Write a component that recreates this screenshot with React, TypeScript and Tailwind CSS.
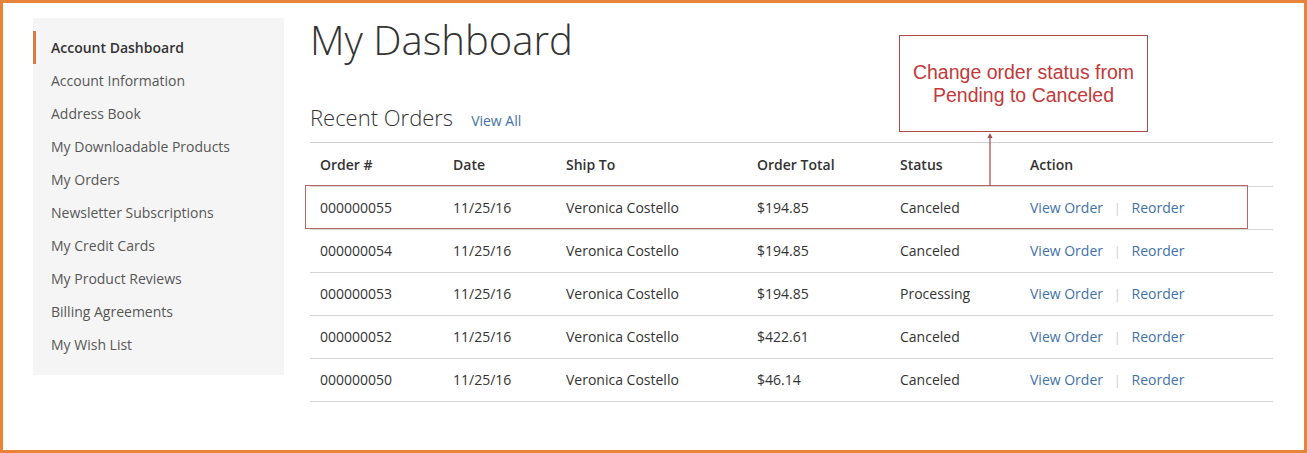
const navItems = [
  "Account Dashboard",
  "Account Information",
  "Address Book",
  "My Downloadable Products",
  "My Orders",
  "Newsletter Subscriptions",
  "My Credit Cards",
  "My Product Reviews",
  "Billing Agreements",
  "My Wish List",
];

const orders = [
  { id: "000000055", date: "11/25/16", shipTo: "Veronica Costello", total: "$194.85", status: "Canceled" },
  { id: "000000054", date: "11/25/16", shipTo: "Veronica Costello", total: "$194.85", status: "Canceled" },
  { id: "000000053", date: "11/25/16", shipTo: "Veronica Costello", total: "$194.85", status: "Processing" },
  { id: "000000052", date: "11/25/16", shipTo: "Veronica Costello", total: "$422.61", status: "Canceled" },
  { id: "000000050", date: "11/25/16", shipTo: "Veronica Costello", total: "$46.14", status: "Canceled" },
];

function Sidebar() {
  return (
    <div className="w-[251px] h-[357px] shrink-0 bg-[#f5f5f5] pt-[13px]">
      {navItems.map((item, i) => (
        <div
          key={item}
          className={
            i === 0
              ? "h-[33px] flex items-center pl-[15px] border-l-[3px] border-[#d97a45] text-[14px] font-semibold text-[#333]"
              : "h-[33px] flex items-center pl-[18px] text-[14px] text-[#575757]"
          }
        >
          {item}
        </div>
      ))}
    </div>
  );
}

function OrdersTable() {
  return (
    <table className="w-[963px] border-collapse text-[14px] text-[#333] table-fixed">
      <colgroup>
        <col className="w-[133px]" />
        <col className="w-[113px]" />
        <col className="w-[191px]" />
        <col className="w-[143px]" />
        <col className="w-[130px]" />
        <col />
      </colgroup>
      <thead>
        <tr className="h-[43px] border-b border-[#d6d6d6] text-left">
          <th className="pl-[10px] font-semibold">Order #</th>
          <th className="pl-[10px] font-semibold">Date</th>
          <th className="pl-[10px] font-semibold">Ship To</th>
          <th className="pl-[10px] font-semibold">Order Total</th>
          <th className="pl-[10px] font-semibold">Status</th>
          <th className="pl-[10px] font-semibold">Action</th>
        </tr>
      </thead>
      <tbody>
        {orders.map((o) => (
          <tr key={o.id} className="h-[43px] border-b border-[#d6d6d6]">
            <td className="pl-[10px]">{o.id}</td>
            <td className="pl-[10px]">{o.date}</td>
            <td className="pl-[10px]">{o.shipTo}</td>
            <td className="pl-[10px]">{o.total}</td>
            <td className="pl-[10px]">{o.status}</td>
            <td className="pl-[10px]">
              <span className="text-[#3f72a8]">View Order</span>
              <span className="mx-[11px] text-[#c8c8c8] text-[12px]">|</span>
              <span className="text-[#3f72a8]">Reorder</span>
            </td>
          </tr>
        ))}
      </tbody>
    </table>
  );
}

export default function App() {
  return (
    <div className="w-[1307px] h-[453px] border-[3px] border-[#e8833a] bg-white font-['Open_Sans',sans-serif] overflow-hidden">
      <div className="flex pl-[30px] pt-[15px] gap-[26px]">
        <Sidebar />
        <div className="relative w-[963px]">
          <h1 className="text-[40px] leading-[44px] font-light text-[#333]">My Dashboard</h1>
          <div className="mt-[40px] flex items-baseline pb-[10px] border-b border-[#cfcfcf]">
            <span className="text-[22px] leading-[30px] font-light text-[#333]">Recent Orders</span>
            <span className="ml-[18px] text-[14px] text-[#3f72a8]">View All</span>
          </div>
          <OrdersTable />

          {/* annotation overlay */}
          <div className="absolute left-[-5px] top-[167px] w-[943px] h-[44px] border border-[#b86666]" />
          <div className="absolute left-[589px] top-[17px] w-[249px] h-[97px] border border-[#b04a4a] bg-white flex flex-col items-center justify-center font-['Liberation_Sans',Arial,sans-serif] text-[19.5px] leading-[23px] text-[#c23a3a]">
            <span>Change order status from</span>
            <span>Pending to Canceled</span>
          </div>
          <svg className="absolute left-[675px] top-[114px]" width="10" height="54" viewBox="0 0 10 54">
            <line x1="5" y1="3" x2="5" y2="54" stroke="#a64a4a" strokeWidth="1.2" />
            <polygon points="5,1 2.5,6 7.5,6" fill="#a64a4a" />
          </svg>
        </div>
      </div>
    </div>
  );
}
